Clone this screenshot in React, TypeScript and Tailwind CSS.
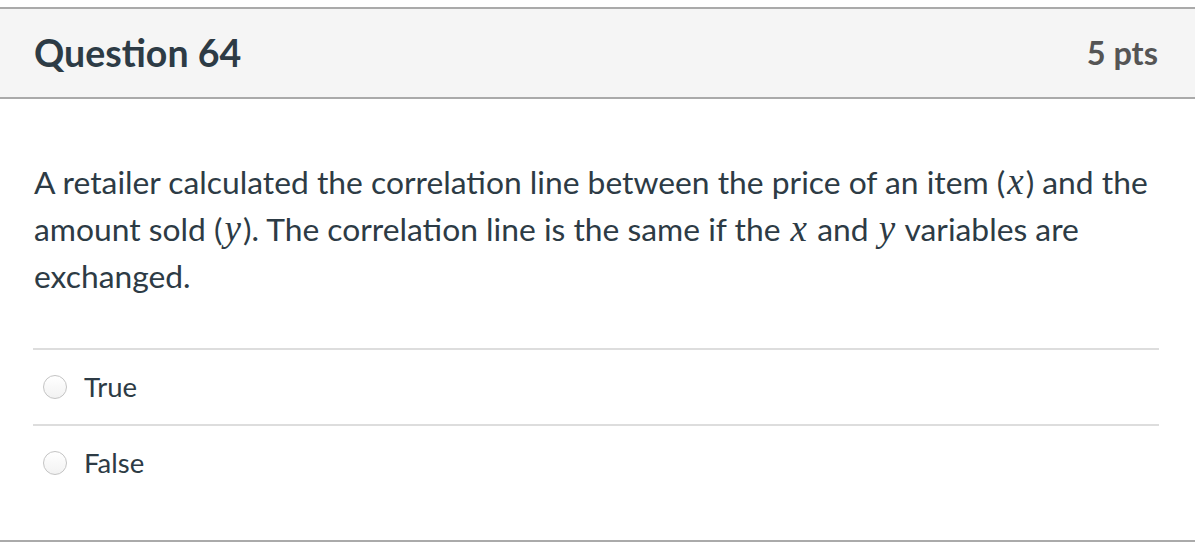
import React from "react";

function MathVar({ v }: { v: string }) {
  return (
    <span className="px-[2px] italic text-[37px] leading-none" style={{ fontFamily: '"Liberation Serif", "DejaVu Serif", serif' }}>
      {v}
    </span>
  );
}

function Radio() {
  return (
    <span className="inline-block h-6 w-6 shrink-0 rounded-full border border-[#c4c4c4] bg-gradient-to-b from-white to-[#f2f2f2]" />
  );
}

const answers = ["True", "False"];

export default function App() {
  return (
    <div className="min-h-screen bg-white pt-[7px] text-[#2d3b45]" style={{ fontFamily: 'Lato, "Noto Sans", sans-serif' }}>
      <div className="border-y-2 border-[#aaaaaa]">
        <div className="flex h-[90px] items-center justify-between border-b-2 border-[#aaaaaa] bg-[#f5f5f5] pl-[34px] pr-[37px]">
          <h2 className="text-[37.5px] font-bold leading-none">Question 64</h2>
          <span className="text-[32.5px] font-bold leading-none text-[#555555]">5 pts</span>
        </div>
        <div className="px-[34px] pt-[60px] text-[31.8px] leading-[47px]">
          A retailer calculated the correlation line between the price of an item (<MathVar v="x" />) and the
          amount sold (<MathVar v="y" />). The correlation line is the same if the <MathVar v="x" /> and{" "}
          <MathVar v="y" /> variables are exchanged.
        </div>
        <div className="ml-[33px] mr-[36px] mt-[48px] mb-[40px]">
          {answers.map((a) => (
            <div key={a} className="flex h-[76px] items-center gap-[17px] border-t-2 border-[#dddddd] pl-[10px]">
              <Radio />
              <span className="text-[27.5px]">{a}</span>
            </div>
          ))}
        </div>
      </div>
    </div>
  );
}
